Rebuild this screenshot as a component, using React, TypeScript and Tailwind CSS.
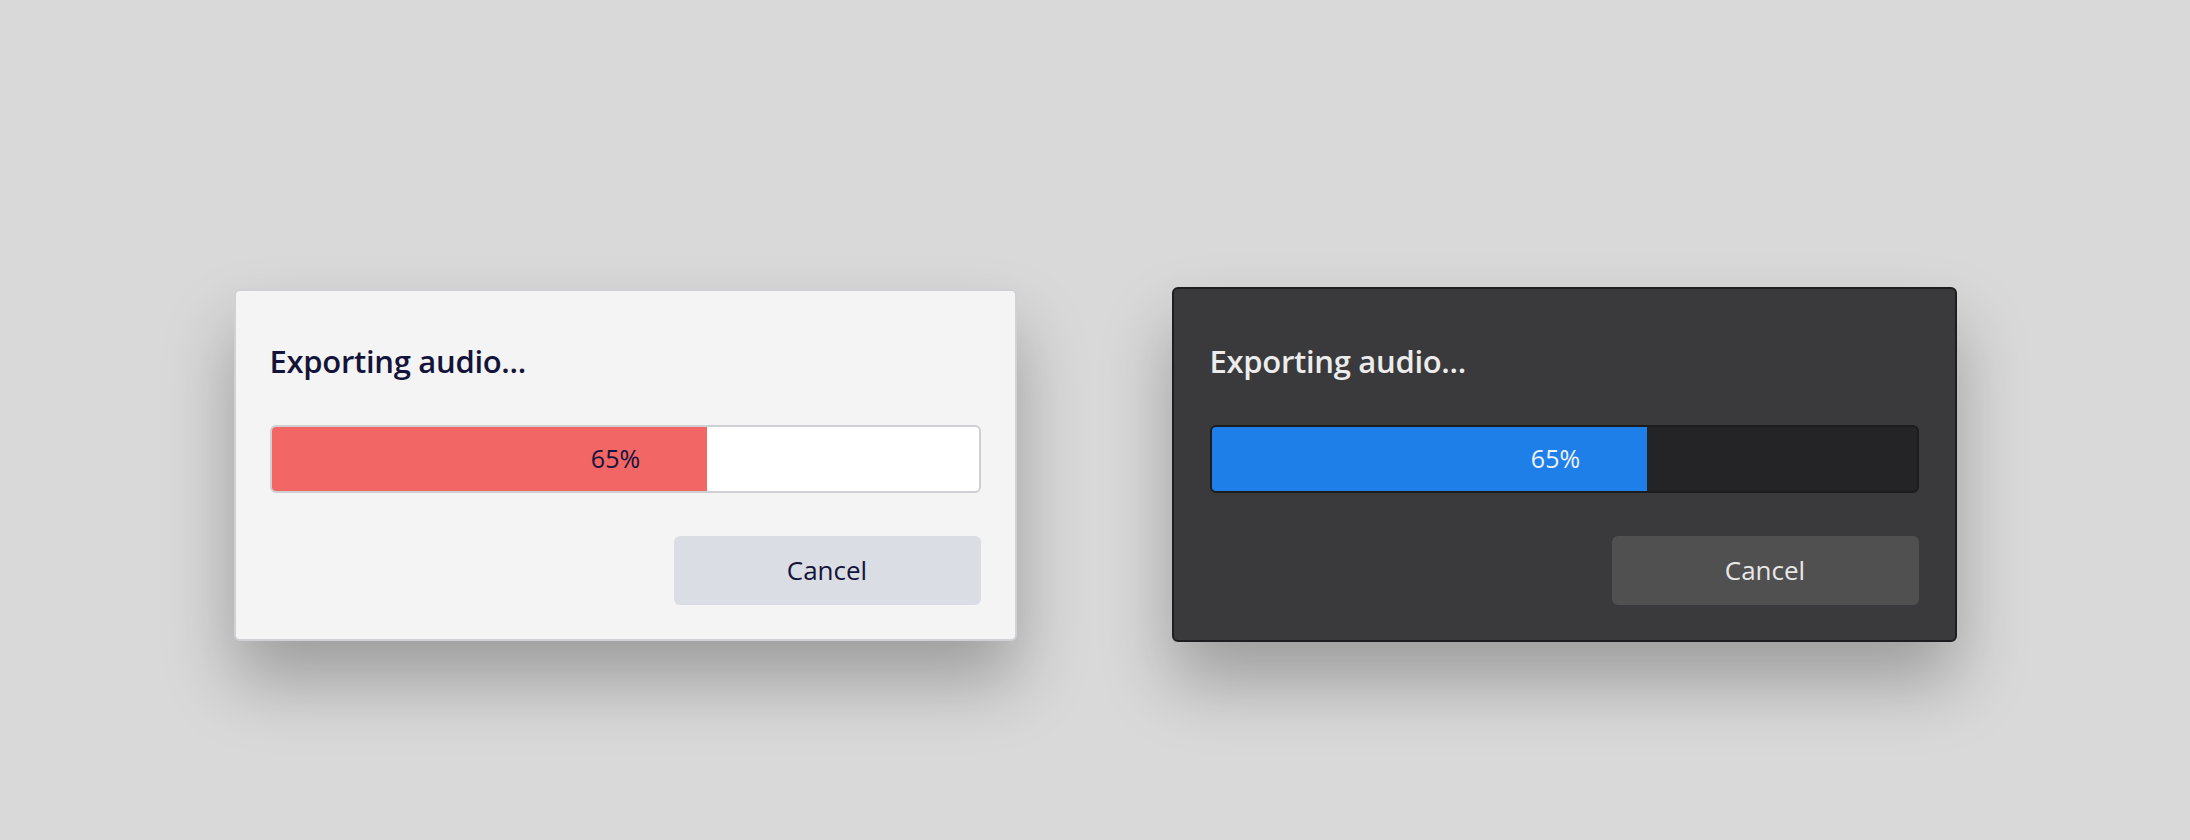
const font = { fontFamily: '"Open Sans", "Noto Sans", sans-serif' };

type Theme = "light" | "dark";

function ExportDialog({ theme, progress }: { theme: Theme; progress: number }) {
  const dark = theme === "dark";
  return (
    <div
      className={
        dark
          ? "w-[785px] h-[355px] rounded-[6px] border-2 border-[#1e1e20] bg-[#3a3a3c] px-[36px] pt-[52px] pb-[34px] flex flex-col shadow-[0_40px_70px_rgba(0,0,0,0.28)]"
          : "w-[783px] h-[352px] rounded-[6px] border-2 border-[#cfd1d5] bg-[#f4f4f4] px-[34px] pt-[50px] pb-[34px] flex flex-col shadow-[0_40px_70px_rgba(0,0,0,0.28)]"
      }
    >
      <div
        className={
          dark
            ? "h-[40px] flex items-center text-[31px] font-semibold text-[#ececec] tracking-[-0.3px]"
            : "h-[40px] flex items-center text-[31px] font-semibold text-[#14143a] tracking-[-0.3px]"
        }
      >
        Exporting audio...
      </div>

      <div
        className={
          dark
            ? "relative mt-[44px] h-[68px] rounded-[6px] border-2 border-[#1c1c1e] bg-[#242426] overflow-hidden flex"
            : "relative mt-[44px] h-[68px] rounded-[6px] border-2 border-[#cfd0d4] bg-white overflow-hidden flex"
        }
      >
        <div className={dark ? "w-[435px] h-full bg-[#1f7fe9]" : "w-[435px] h-full bg-[#f26666]"} />
        <div
          className={
            dark
              ? "absolute top-0 bottom-0 left-[344px] -translate-x-1/2 flex items-center text-[25px] text-[#eef2fa]"
              : "absolute top-0 bottom-0 left-[344px] -translate-x-1/2 flex items-center text-[25px] text-[#14143a]"
          }
        >
          {progress}%
        </div>
      </div>

      <div className="mt-[43px] flex justify-end">
        <button
          className={
            dark
              ? "w-[307px] h-[69px] rounded-[6px] bg-[#505050] text-[26px] text-[#e8e8e8]"
              : "w-[307px] h-[69px] rounded-[6px] bg-[#dadde3] text-[26px] text-[#14143a]"
          }
          style={font}
        >
          Cancel
        </button>
      </div>
    </div>
  );
}

export default function App() {
  return (
    <div className="w-[2190px] h-[840px] bg-[#d9d9d9] flex justify-center items-start gap-[155px] pt-[287px]" style={font}>
      <div className="pt-[2px]">
        <ExportDialog theme="light" progress={65} />
      </div>
      <ExportDialog theme="dark" progress={65} />
    </div>
  );
}
